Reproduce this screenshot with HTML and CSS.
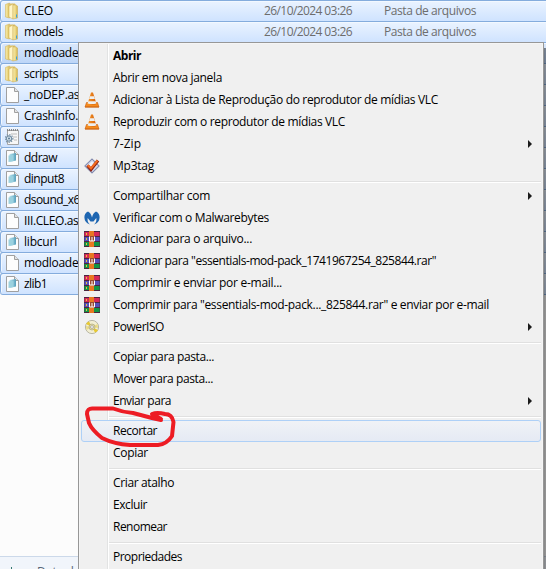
FILE: index.html
```html
<!DOCTYPE html>
<html lang="pt-BR">
<head>
<meta charset="utf-8">
<title>Explorer</title>
<link rel="stylesheet" href="styles.css">
</head>
<body>
<svg class="defs" width="0" height="0">
  <defs>
    <linearGradient id="gold" x1="0" x2="1"><stop offset="0" stop-color="#f8eeb0"/><stop offset=".6" stop-color="#ead47e"/><stop offset="1" stop-color="#d3b24c"/></linearGradient>
    <linearGradient id="cone" x1="0" x2="1"><stop offset="0" stop-color="#f79a2c"/><stop offset="1" stop-color="#d65e08"/></linearGradient>
    <linearGradient id="glass" x1="0" x2="1"><stop offset="0" stop-color="#b9e3ee"/><stop offset="1" stop-color="#57a0bd"/></linearGradient>
    <symbol id="folder" viewBox="0 0 16 18"><path d="M.5 2.500l4-1.500v15l-4-1z" fill="url(#gold)" stroke="#d3b65d" stroke-width=".6"/><path d="M5 1.500h5l1 2v12H5z" fill="#dcc06a"/><path d="M4 4l4-2v15l-4-2z" fill="#fff6c8" stroke="#cdae50" stroke-width=".5"/><path d="M8 3h3l1.500 1v12l-4.500 1z" fill="url(#gold)" stroke="#c9aa50" stroke-width=".5"/><path d="M11.500 12.500v3" stroke="#38a5d8"/></symbol>
    <symbol id="page" viewBox="0 0 16 18"><path d="M1.500 1.500h8l4 4v11h-12z" fill="#fdfdfd" stroke="#a0a0a0"/><path d="M9.500 1.500v4h4" fill="#e4e4e4" stroke="#a0a0a0"/></symbol>
    <symbol id="dll" viewBox="0 0 16 18"><path d="M1.500 1.500h8l4 4v11h-12z" fill="#fdfdfd" stroke="#a0a0a0"/><path d="M9.500 1.500v4h4" fill="#e4e4e4" stroke="#a0a0a0"/><path d="M4.500 5l6.500-1v7.500L4.500 13z" fill="url(#glass)"/><path d="M3.500 6.500l5-.5v6l-5 1z" fill="#9bd1df"/></symbol>
    <symbol id="ini" viewBox="0 0 16 18"><path d="M2.500 2.500h11v14h-11z" fill="#f7f7f7" stroke="#a5a5a5"/><path d="M2 2h12" stroke="#858585" stroke-dasharray="1 1" stroke-width="2"/><path d="M6 6h6M8 9h4M9 12h3" stroke="#bbb"/><circle cx="4" cy="10.500" r="2.700" fill="#d9e7ef" stroke="#7590a5" stroke-width="1.200"/><circle cx="4" cy="10.500" r="3.900" fill="none" stroke="#7790a5" stroke-dasharray="1.200 1.400" stroke-width="1.200"/><circle cx="4" cy="10.500" r=".9" fill="#496b87"/></symbol>
    <symbol id="vlc" viewBox="0 0 16 16"><path d="M2.500 10.500h11l1.500 4.500H1z" fill="#f58b1e" stroke="#c85b0b" stroke-width=".6"/><path d="M7 .5h2L12.500 12q-4.500 2-9 0z" fill="url(#cone)"/><path d="M6 4.200h4l.9 2.800H5.100zM4.300 9.200h7.400l.7 2.200q-4.400 1.400-8.800 0z" fill="#eef0f1"/><path d="M1 15h14" stroke="#d16b18"/></symbol>
    <symbol id="tag" viewBox="0 0 16 16"><path d="M8 .8L15.300 8 8 15.200.7 8z" fill="#bfc5dc" stroke="#7179a1"/><path d="M8 3l5 5-5 5-5-5z" fill="#eff0f7"/><path d="M3.500 7.500L7 11.500 14 2.500" fill="none" stroke="#8e2012" stroke-width="3.200"/><path d="M3.700 7.200L7 10.500l6.500-8" fill="none" stroke="#f36b20" stroke-width="2"/></symbol>
    <symbol id="mwb" viewBox="0 0 16 16"><path d="M4 1.500C6 2.500 7.400 4.500 8 7.500 8.600 4.500 10 2.500 12 1.500c2.500 1 3.800 3.600 3.600 6.300-.2 3.400-2.300 6-5.600 6.700 2-1.600 2.800-3.700 2.300-6.500L9.500 11.500h-3L3.700 8c-.5 2.800.3 4.900 2.300 6.500C2.700 13.800.6 11.200.4 7.800.2 5.100 1.500 2.500 4 1.500z" fill="#1e66b1"/></symbol>
    <symbol id="rar" viewBox="0 0 16 16"><path fill="#d62857" d="M0 1h16v4H0z"/><path fill="#554eb9" d="M0 6h16v4H0z"/><path fill="#139545" d="M0 11h16v4H0z"/><path d="M0 .5h16M0 5.500h16M0 10.500h16M0 15.500h16" stroke="#4c2540"/><path d="M.5 0v16M15.500 0v16" stroke="#432e40" stroke-opacity=".4"/><path fill="#e87820" d="M5 0h5v16H5z"/><path d="M5 5h5v5.500H5z" fill="#9a4a31"/><path d="M5.500 5.500v4.500h5V5.500M8 6v4" fill="none" stroke="#fff"/><path d="M2.500 2v2M2.500 7v2M2.500 12v2" stroke="#e7c43c"/></symbol>
    <symbol id="disc" viewBox="0 0 16 16"><circle cx="8" cy="8" r="6.600" fill="#f2eed2" stroke="#aaa895" stroke-width=".8"/><path d="M8 8L2 5q1-2 3-2.600zM8 8l6 3q-1 2-3 2.600z" fill="#e8ca32"/><path d="M8 8L2.500 11 2 7zM8 8l5.500-3 .5 4z" fill="#eadb83"/><circle cx="8" cy="8" r="3" fill="#e6dc9b" stroke="#aaa686" stroke-width=".7"/><circle cx="8" cy="8" r="1.400" fill="#fff" stroke="#888" stroke-width=".6"/></symbol>
  </defs>
</svg>
<main class="window">
  <section class="files">
    <div class="file"><svg><use href="#folder"/></svg><span data-w="29">CLEO</span><time data-w="88">26/10/2024 03:26</time><em data-w="92">Pasta de arquivos</em></div>
    <div class="file"><svg><use href="#folder"/></svg><span data-w="39">models</span><time data-w="88">26/10/2024 03:26</time><em data-w="92">Pasta de arquivos</em></div>
    <div class="file dark"><svg><use href="#folder"/></svg><span data-w="59">modloader</span></div>
    <div class="file"><svg><use href="#folder"/></svg><span data-w="34">scripts</span></div>
    <div class="file"><svg><use href="#page"/></svg><span data-w="58">_noDEP.asi</span></div>
    <div class="file"><svg><use href="#page"/></svg><span data-w="54">CrashInfo.</span></div>
    <div class="file"><svg><use href="#ini"/></svg><span data-w="51">CrashInfo</span></div>
    <div class="file"><svg><use href="#dll"/></svg><span data-w="33">ddraw</span></div>
    <div class="file"><svg><use href="#dll"/></svg><span data-w="40">dinput8</span></div>
    <div class="file"><svg><use href="#dll"/></svg><span data-w="62">dsound_x64</span></div>
    <div class="file"><svg><use href="#page"/></svg><span data-w="57">III.CLEO.asi</span></div>
    <div class="file"><svg><use href="#dll"/></svg><span data-w="33">libcurl</span></div>
    <div class="file"><svg><use href="#page"/></svg><span data-w="59">modloader</span></div>
    <div class="file"><svg><use href="#dll"/></svg><span data-w="23">zlib1</span></div>
  </section>
  <footer class="details"><i></i><span>Data d</span></footer>
</main>
<div class="shade"></div>
<nav class="menu">
  <div class="item bold"><span data-w="28">Abrir</span></div>
  <div class="item"><span data-w="109">Abrir em nova janela</span></div>
  <div class="item"><svg><use href="#vlc"/></svg><span data-w="325">Adicionar à Lista de Reprodução do reprodutor de mídias VLC</span></div>
  <div class="item"><svg><use href="#vlc"/></svg><span data-w="232">Reproduzir com o reprodutor de mídias VLC</span></div>
  <div class="item sub"><span data-w="28">7-Zip</span></div>
  <div class="item"><svg><use href="#tag"/></svg><span data-w="41">Mp3tag</span></div>
  <hr>
  <div class="item sub"><span data-w="97">Compartilhar com</span></div>
  <div class="item short"><svg><use href="#mwb"/></svg><span data-w="156">Verificar com o Malwarebytes</span></div>
  <div class="item"><svg><use href="#rar"/></svg><span data-w="139">Adicionar para o arquivo...</span></div>
  <div class="item"><svg><use href="#rar"/></svg><span data-w="323">Adicionar para "essentials-mod-pack_1741967254_825844.rar"</span></div>
  <div class="item"><svg><use href="#rar"/></svg><span data-w="169">Comprimir e enviar por e-mail...</span></div>
  <div class="item"><svg><use href="#rar"/></svg><span data-w="376">Comprimir para "essentials-mod-pack..._825844.rar" e enviar por e-mail</span></div>
  <div class="item sub"><svg><use href="#disc"/></svg><span data-w="51">PowerISO</span></div>
  <hr>
  <div class="item"><span data-w="101">Copiar para pasta...</span></div>
  <div class="item"><span data-w="100">Mover para pasta...</span></div>
  <div class="item sub"><span data-w="58">Enviar para</span></div>
  <hr>
  <div class="item hot"><span data-w="44">Recortar</span></div>
  <div class="item"><span data-w="35">Copiar</span></div>
  <hr>
  <div class="item"><span data-w="61">Criar atalho</span></div>
  <div class="item"><span data-w="34">Excluir</span></div>
  <div class="item"><span data-w="54">Renomear</span></div>
  <hr>
  <div class="item"><span data-w="69">Propriedades</span></div>
</nav>
<svg class="scribble" viewBox="0 0 92 46"><path d="M79 16L70 14 51 9Q40 8 31 4.500H11Q5 4 5 10L7 19Q10 26 20 34Q32 40 48 41H76Q85 40 90 32L91.500 18Q90 10 83 10Q75 8 70 10L79 15"/></svg>
<script src="fit.js"></script>
</body>
</html>
```
FILE: styles.css
```css
* { box-sizing: border-box; }
body {
  margin: 0;
  width: 546px;
  height: 569px;
  position: relative;
  overflow: hidden;
  background: #fcfcfc;
  color: #000;
  font: 12px/16px "Open Sans", "Noto Sans", sans-serif;
}
.defs { position: absolute; }
.window { display: flex; flex-direction: column; height: 569px; }
.files { flex: none; height: 556px; }
.file {
  display: grid;
  grid-template-columns: 19px 240px 120px 1fr;
  align-items: center;
  height: 21px;
  padding-left: 4px;
  margin-right: -3px;
  border: 1px solid #84acdd;
  border-bottom-width: 0;
  border-radius: 3px;
  background: linear-gradient(#eaf3ff, #cfe3ff);
  box-shadow: inset 1px 1px #f2f8ff, 0 1px #84acdd;
  white-space: nowrap;
}
.file.dark { background: linear-gradient(#dae8fc, #bdd6f8); }
.file svg { width: 16px; height: 18px; }
.file span, .file time, .file em { justify-self: start; font-style: normal; }
.file time, .file em { color: #6d6d6d; }
.details {
  display: flex;
  height: 13px;
  padding: 8px 0 0 11px;
  overflow: hidden;
  border-top: 1px solid #ccd9ea;
  background: #f1f5fb;
  color: #5a6779;
  line-height: 14px;
}
.details i { width: 1px; height: 5px; margin: 2px 25px 0 0; background: #35786f; }
.shade {
  position: absolute;
  left: 543px;
  top: 48px;
  width: 3px;
  height: 521px;
  background: linear-gradient(90deg, rgba(0,0,0,.5), rgba(0,0,0,.4));
}
.menu {
  position: absolute;
  left: 78px;
  top: 42px;
  width: 466px;
  height: 540px;
  padding: 2px 2px 0;
  border: 1px solid #979797;
  background: linear-gradient(90deg, transparent 28px, #e2e3e3 28px 29px, #fff 29px 30px, transparent 30px) #f0f0f0;
  box-shadow: inset 0 0 0 1px #f5f5f5;
}
.item {
  display: flex;
  align-items: center;
  height: 22px;
  padding-left: 31px;
  border: 1px solid transparent;
  border-radius: 3px;
  white-space: nowrap;
}
.item.short { height: 21px; }
.item svg { width: 16px; height: 16px; margin: 0 13px 0 -29px; }
.bold { font-weight: 700; }
.sub::after {
  content: "";
  margin-left: auto;
  margin-right: 8px;
  border: 4px solid transparent;
  border-left-color: #1b1b1b;
  border-right: 0;
}
.hot { border-color: #aed0f7; background: linear-gradient(#f0f2f6, #e5eaf4); }
hr { height: 2px; margin: 4px 0 2px 28px; border: 0; border-top: 1px solid #e0e0e0; background: #fff; }
.scribble {
  position: absolute;
  left: 82px;
  top: 404px;
  width: 92px;
  height: 46px;
  overflow: visible;
}
.scribble path { fill: none; stroke: #ed1c24; stroke-width: 4; stroke-linecap: round; stroke-linejoin: round; }
```
FILE: fit.js
```js
document.querySelectorAll("[data-w]").forEach(function (el) {
  var gap = Number(el.dataset.w) - el.getBoundingClientRect().width;
  el.style.letterSpacing = gap / el.textContent.length + "px";
});
```
